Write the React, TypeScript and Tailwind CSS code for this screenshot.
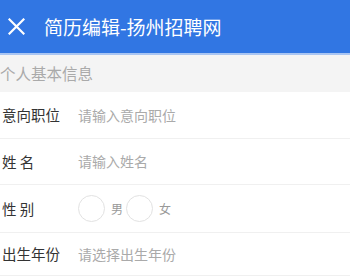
import React from 'react';

const font = { fontFamily: '"Noto Sans CJK SC", "Noto Sans", sans-serif' };

const Row = ({ h, label, children }: { h: string; label: string; children: React.ReactNode }) => (
  <div className={`flex items-center border-b border-[#f0f0f0] pl-[2px] ${h}`}>
    <div className="w-[76px] shrink-0 text-[14.5px] text-[#333] whitespace-pre">{label}</div>
    <div className="flex items-center">{children}</div>
  </div>
);

const Radio = ({ text }: { text: string }) => (
  <div className="flex items-center">
    <div className="w-[27px] h-[27px] rounded-full border border-[#e2e2e2] bg-white" />
    <span className="ml-[6px] mr-[3px] text-[12px] text-[#999]">{text}</span>
  </div>
);

export default function App() {
  return (
    <div className="w-[350px] h-[280px] bg-white overflow-hidden" style={font}>
      {/* Header */}
      <div className="h-[55px] bg-[#3176e3] border-b-2 border-[#a9c5f2] flex items-center">
        <svg className="ml-[8px] w-[17px] h-[17px]" viewBox="0 0 17 17" fill="none" stroke="white" strokeWidth="2.2" strokeLinecap="square">
          <path d="M1.5 1.5 L15.5 15.5 M15.5 1.5 L1.5 15.5" />
        </svg>
        <span className="ml-[19px] text-[19px] text-white leading-none">简历编辑-扬州招聘网</span>
      </div>

      {/* Section title */}
      <div className="h-[37px] bg-[#f4f4f4] flex items-center">
        <span className="text-[15.5px] text-[#aaa] leading-none">个人基本信息</span>
      </div>

      <Row h="h-[47px]" label="意向职位">
        <span className="text-[14px] text-[#aaa]">请输入意向职位</span>
      </Row>
      <Row h="h-[46px]" label="姓 名">
        <span className="text-[14px] text-[#aaa]">请输入姓名</span>
      </Row>
      <Row h="h-[48px]" label="性 别">
        <Radio text="男" />
        <Radio text="女" />
      </Row>
      <Row h="h-[43px]" label="出生年份">
        <span className="text-[14px] text-[#aaa]">请选择出生年份</span>
      </Row>
    </div>
  );
}
